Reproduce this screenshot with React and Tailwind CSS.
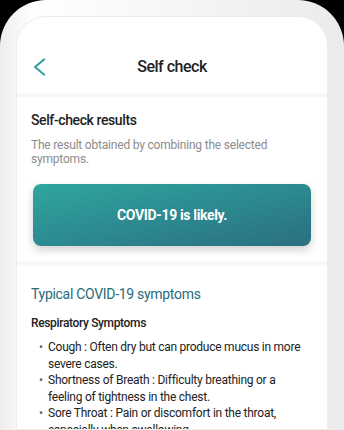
import React from 'react';

const symptoms = [
  { name: 'Cough', text: 'Often dry but can produce mucus in more severe cases.' },
  { name: 'Shortness of Breath', text: 'Difficulty breathing or a feeling of tightness in the chest.' },
  { name: 'Sore Throat', text: 'Pain or discomfort in the throat, especially when swallowing.' },
  { name: 'Congestion', text: 'Stuffy or runny nose.' },
];

const BackIcon = () => (
  <svg width="13" height="18" viewBox="0 0 13 18" fill="none">
    <path d="M11 1.5 L2 9 L11 16.5" stroke="#36a09f" strokeWidth="2.2" strokeLinecap="round" strokeLinejoin="round" />
  </svg>
);

const App = () => {
  return (
    <div className="w-[344px] h-[430px] bg-black overflow-hidden" style={{ fontFamily: 'Roboto, "Noto Sans", sans-serif' }}>
      <div className="h-full rounded-t-[46px] bg-gradient-to-r from-[#ededed] via-white via-10% to-[#ebebeb] px-[16px] pt-[16px]">
        <div className="h-full rounded-t-[30px] border border-[#ececec] bg-[#f8f8f8] overflow-hidden">
          {/* header */}
          <div className="relative h-[76px] bg-white flex items-center justify-center pt-[24px]">
            <button className="absolute left-[16px] top-[41px]">
              <BackIcon />
            </button>
            <h1 className="text-[16px] font-medium tracking-[-0.5px] text-[#222]">Self check</h1>
          </div>

          {/* result card */}
          <div className="mt-[4px] bg-white px-[14px] pt-[13px] pb-[15px]">
            <h2 className="text-[14px] leading-[20px] font-medium tracking-[-0.4px] text-[#222]">Self-check results</h2>
            <p className="mt-[8px] text-[12px] leading-[14px] tracking-[-0.2px] text-[#8c8c8c] pr-[20px]">
              The result obtained by combining the selected symptoms.
            </p>
            <div className="mt-[18px] mx-[2px] h-[62px] rounded-[8px] bg-gradient-to-br from-[#2ea6a0] to-[#2a6f80] shadow-[0_4px_8px_rgba(0,0,0,0.18)] flex items-center justify-center">
              <span className="text-white text-[14px] font-bold tracking-[-0.35px]">COVID-19 is likely.</span>
            </div>
          </div>

          {/* symptoms card */}
          <div className="mt-[5px] bg-white px-[14px] pt-[18px]">
            <h2 className="text-[14px] leading-[20px] tracking-[-0.3px] text-[#2b6b7a]">Typical COVID-19 symptoms</h2>
            <h3 className="mt-[10px] text-[12px] leading-[18px] font-medium tracking-[-0.35px] text-[#222]">Respiratory Symptoms</h3>
            <ul className="mt-[7px] pl-[8px] pr-[4px] text-[12px] leading-[16.5px] tracking-[-0.25px] text-[#222]">
              {symptoms.map((s) => (
                <li key={s.name} className="flex">
                  <span className="w-[9px] shrink-0 text-[#666]">•</span>
                  <span>{s.name} : {s.text}</span>
                </li>
              ))}
            </ul>
          </div>
        </div>
      </div>
    </div>
  );
};

export default App;
